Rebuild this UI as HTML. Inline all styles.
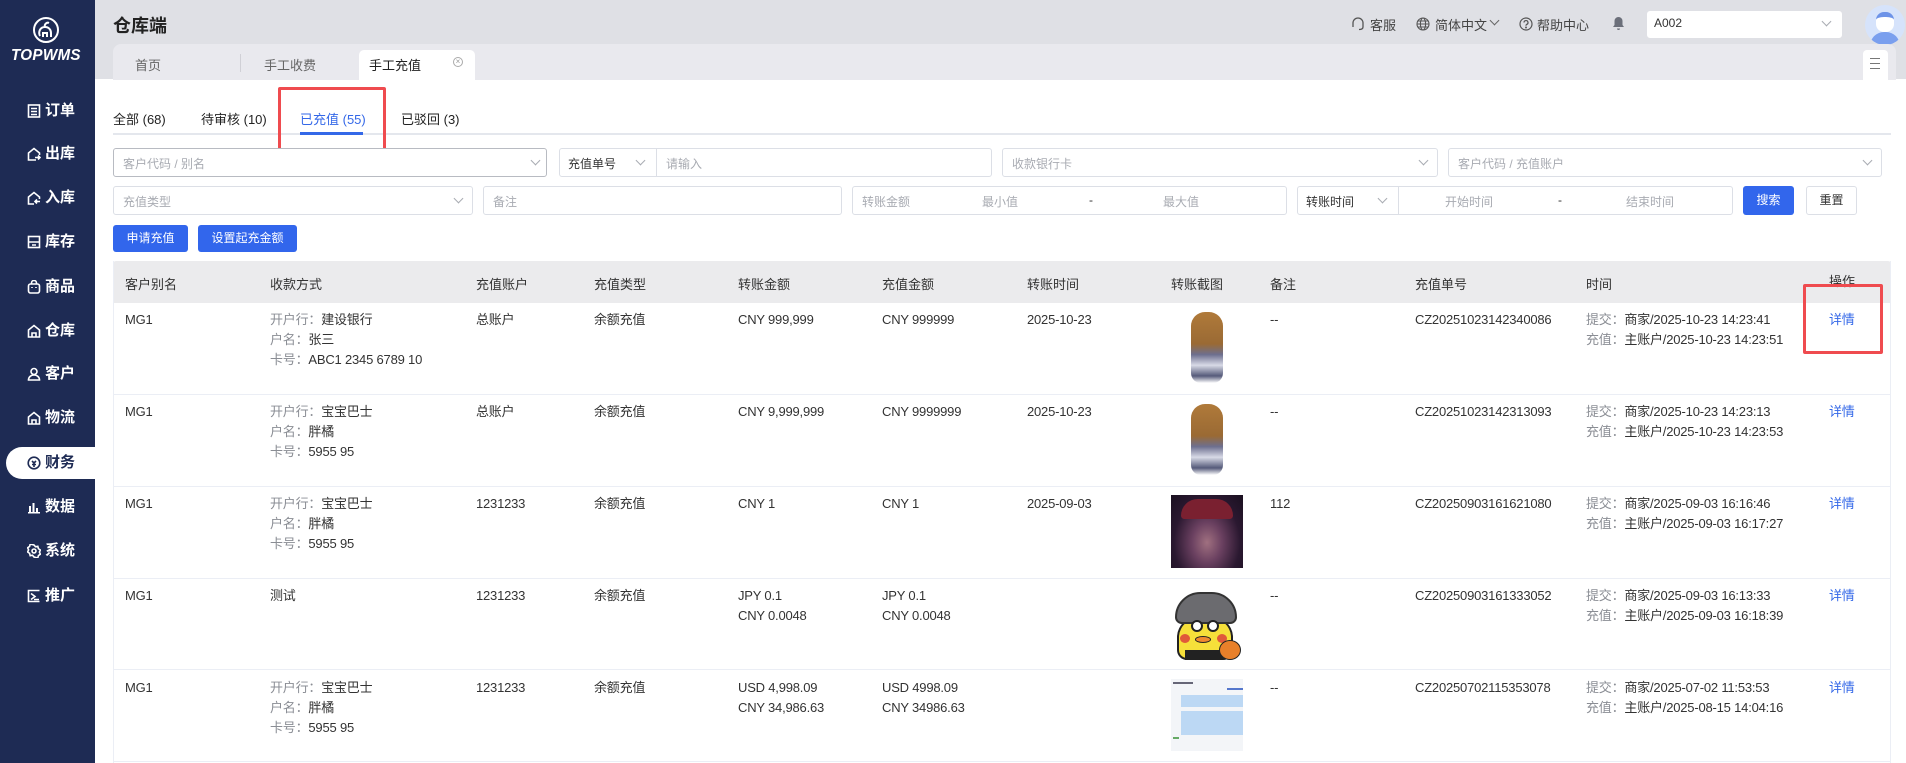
<!DOCTYPE html>
<html><head><meta charset="utf-8">
<style>
*{margin:0;padding:0;box-sizing:border-box}
body{width:1906px;height:763px;overflow:hidden;background:#fff;font-family:"Liberation Sans","Noto Sans CJK SC",sans-serif;font-size:13px;color:#333;position:relative}
.a{position:absolute}
.side{left:0;top:0;width:95px;height:763px;background:#1e2b54}
.mi{position:absolute;left:27px;color:#fff;font-weight:bold;font-size:15px;height:20px;line-height:20px;white-space:nowrap}
.mi svg{position:absolute;left:0;top:3px}
.mi span{position:absolute;left:18px;top:0}
.hdr{left:95px;top:0;width:1811px;height:79px;background:#dfe0e5}
.box{position:absolute;border:1px solid #dcdfe6;border-radius:3px;background:#fff}
.ph{position:absolute;color:#a8abb2;font-size:12px;white-space:nowrap}
.chev{position:absolute;width:7px;height:7px;border-right:1px solid #a8abb2;border-bottom:1px solid #a8abb2;transform:rotate(45deg)}
.btn{position:absolute;background:#3266ec;color:#fff;border-radius:3px;font-size:12px;text-align:center;line-height:27px}
.th{position:absolute;top:274px;font-size:13px;color:#333}
.c{position:absolute;font-size:13px;color:#333;white-space:nowrap;line-height:20px;letter-spacing:-0.2px}
.g{color:#8a8d94}
.row{position:absolute;left:113px;width:1778px;height:1px;background:#ebeef5}
.lnk{color:#3468e8}
</style></head><body>
<div class="a side">
  <svg class="a" style="left:32px;top:16px" width="28" height="28" viewBox="0 0 28 28" fill="none" stroke="#fff" stroke-width="2"><circle cx="14" cy="14" r="12"/><path d="M8 20c-2-4 0-9 5-9 4 0 6 3 6 6v4M13 11c-1-3 2-5 4-4M11 21v-4h4v4"/></svg>
  <div class="a" style="left:11px;top:47px;color:#fff;font-weight:bold;font-style:italic;font-size:16px;letter-spacing:0.3px;transform:scaleX(0.95);transform-origin:left">TOPWMS</div>
  <div class="mi" style="top:101px"><svg width="14" height="14" viewBox="0 0 14 14" fill="none" stroke="#fff" stroke-width="1.6"><rect x="1.5" y="1" width="11" height="12"/><path d="M4 4.5h6M4 7.5h6M4 10.5h6"/></svg><span>订单</span></div>
  <div class="mi" style="top:144px"><svg width="14" height="14" viewBox="0 0 14 14" fill="none" stroke="#fff" stroke-width="1.6"><path d="M9 13H1.5V6L7 1.5 12.5 6v2M8 10.5h5M11 8.5l2 2-2 2"/></svg><span>出库</span></div>
  <div class="mi" style="top:188px"><svg width="14" height="14" viewBox="0 0 14 14" fill="none" stroke="#fff" stroke-width="1.6"><path d="M7 13H1.5V6L7 1.5 12.5 6v2M13 10.5H8M10 8.5l-2 2 2 2"/></svg><span>入库</span></div>
  <div class="mi" style="top:232px"><svg width="14" height="14" viewBox="0 0 14 14" fill="none" stroke="#fff" stroke-width="1.6"><rect x="1.5" y="1.5" width="11" height="11"/><path d="M1.5 7h11M5 10h4"/></svg><span>库存</span></div>
  <div class="mi" style="top:277px"><svg width="14" height="14" viewBox="0 0 14 14" fill="none" stroke="#fff" stroke-width="1.6"><rect x="1.5" y="4" width="11" height="9" rx="2"/><path d="M4.5 4V3a2.5 2.5 0 0 1 5 0v1M5 7v1M9 7v1"/></svg><span>商品</span></div>
  <div class="mi" style="top:321px"><svg width="14" height="14" viewBox="0 0 14 14" fill="none" stroke="#fff" stroke-width="1.6"><path d="M1.5 13V6L7 1.5 12.5 6v7zM5 13V9h4v4"/></svg><span>仓库</span></div>
  <div class="mi" style="top:364px"><svg width="14" height="14" viewBox="0 0 14 14" fill="none" stroke="#fff" stroke-width="1.6"><circle cx="7" cy="4.5" r="3"/><path d="M1.5 13c0-3 2.5-5 5.5-5s5.5 2 5.5 5z"/></svg><span>客户</span></div>
  <div class="mi" style="top:408px"><svg width="14" height="14" viewBox="0 0 14 14" fill="none" stroke="#fff" stroke-width="1.6"><path d="M1.5 13V6L7 1.5 12.5 6v7zM5 13V9h4v4"/></svg><span>物流</span></div>
  <div class="a" style="left:6px;top:447px;width:89px;height:32px;background:#fff;border-radius:16px 0 0 16px"></div>
  <div class="mi" style="top:453px;color:#1e2b54"><svg width="14" height="14" viewBox="0 0 14 14" fill="none" stroke="#1e2b54" stroke-width="1.6"><circle cx="7" cy="7" r="5.8"/><path d="M5 5l2 2 2-2M7 7v4M5 8.5h4"/></svg><span>财务</span></div>
  <div class="mi" style="top:497px"><svg width="14" height="14" viewBox="0 0 14 14" fill="#fff"><rect x="1" y="12" width="12" height="1.5"/><rect x="2" y="6" width="2" height="6"/><rect x="5.5" y="3" width="2" height="9"/><rect x="9" y="8" width="2" height="4"/></svg><span>数据</span></div>
  <div class="mi" style="top:541px"><svg width="14" height="14" viewBox="0 0 14 14" fill="none" stroke="#fff" stroke-width="1.6"><circle cx="7" cy="7" r="2"/><path d="M7 1l1.5 1.8 2.3-.5.6 2.3 2 1.4-1 2.1 1 2.1-2 1.4-.6 2.3-2.3-.5L7 13l-1.5-1.8-2.3.5-.6-2.3-2-1.4 1-2.1-1-2.1 2-1.4.6-2.3 2.3.5z"/></svg><span>系统</span></div>
  <div class="mi" style="top:586px"><svg width="14" height="14" viewBox="0 0 14 14" fill="none" stroke="#fff" stroke-width="1.6"><path d="M12.5 1.5h-11v11h11M4 4.5l4 3-4 3M7 10.5h5"/></svg><span>推广</span></div>
</div>

<div class="a hdr"></div>
<div class="a" style="left:113px;top:12px;font-size:18px;font-weight:bold;color:#222">仓库端</div>
<svg class="a" style="left:1351px;top:17px" width="14" height="14" viewBox="0 0 14 14" fill="none" stroke="#555" stroke-width="1.3"><path d="M2 9V6a5 5 0 0 1 10 0v3M2 8v2M12 8v2c0 1.5-1.5 2.5-4 2.5"/></svg>
<div class="a" style="left:1370px;top:15px;font-size:13px;color:#444">客服</div>
<svg class="a" style="left:1416px;top:17px" width="14" height="14" viewBox="0 0 14 14" fill="none" stroke="#555" stroke-width="1.1"><circle cx="7" cy="7" r="6"/><ellipse cx="7" cy="7" rx="2.6" ry="6"/><path d="M1 7h12M2 4h10M2 10h10"/></svg>
<div class="a" style="left:1435px;top:15px;font-size:13px;color:#444">简体中文</div>
<div class="chev" style="left:1491px;top:17px;border-color:#666"></div>
<svg class="a" style="left:1519px;top:17px" width="14" height="14" viewBox="0 0 14 14" fill="none" stroke="#555" stroke-width="1.2"><circle cx="7" cy="7" r="6"/><path d="M5 5.5a2 2 0 1 1 2.5 2c-.5.2-.5.7-.5 1.3"/><circle cx="7" cy="10.5" r=".4" fill="#555"/></svg>
<div class="a" style="left:1537px;top:15px;font-size:13px;color:#444">帮助中心</div>
<svg class="a" style="left:1612px;top:16px" width="13" height="15" viewBox="0 0 13 15" fill="#6b6f7a"><path d="M6.5 1a4 4 0 0 1 4 4v4l1.5 2H1l1.5-2V5a4 4 0 0 1 4-4zM5 12.5h3a1.5 1.5 0 0 1-3 0z"/></svg>
<div class="box" style="left:1647px;top:11px;width:195px;height:27px;border-color:#fff"></div>
<div class="a" style="left:1654px;top:16px;font-size:12px;color:#333">A002</div>
<div class="chev" style="left:1823px;top:18px"></div>
<div class="a" style="left:1865px;top:5px;width:40px;height:40px;border-radius:50%;background:#d6e3fb;overflow:hidden">
  <div class="a" style="left:11px;top:7px;width:18px;height:20px;border-radius:8px;background:#fff;border-top:5px solid #6d93e8"></div>
  <div class="a" style="left:5px;top:27px;width:30px;height:16px;border-radius:14px 14px 0 0;background:#7a9fee"></div>
</div>

<div class="a" style="left:113px;top:44px;width:1783px;height:36px;background:#e9e9ee;border-radius:8px 8px 0 0"></div>
<div class="a" style="left:135px;top:55px;font-size:13px;color:#666">首页</div>
<div class="a" style="left:240px;top:54px;width:1px;height:18px;background:#d0d0d6"></div>
<div class="a" style="left:264px;top:55px;font-size:13px;color:#666">手工收费</div>
<div class="a" style="left:359px;top:50px;width:116px;height:30px;background:#fff;border-radius:5px 5px 0 0"></div>
<div class="a" style="left:369px;top:55px;font-size:13px;color:#222">手工充值</div>
<div class="a" style="left:453px;top:57px;width:10px;height:10px;border:1px solid #aaa;border-radius:50%;font-size:8px;line-height:8px;text-align:center;color:#999">×</div>
<div class="a" style="left:1863px;top:50px;width:25px;height:30px;background:#fff;border-radius:4px 4px 0 0"></div>
<div class="a" style="left:1870px;top:58px;width:10px;height:1px;background:#777;box-shadow:0 5px 0 #777,0 10px 0 #777"></div>

<div class="a" style="left:113px;top:109px;font-size:13px;color:#222">全部 (68)</div>
<div class="a" style="left:201px;top:109px;font-size:13px;color:#222">待审核 (10)</div>
<div class="a" style="left:300px;top:109px;font-size:13px;color:#3468e8">已充值 (55)</div>
<div class="a" style="left:401px;top:109px;font-size:13px;color:#222">已驳回 (3)</div>
<div class="a" style="left:113px;top:133px;width:1778px;height:2px;background:#e4e7ed"></div>
<div class="a" style="left:300px;top:132px;width:63px;height:3px;background:#3468e8"></div>
<div class="a" style="left:278px;top:87px;width:108px;height:65px;border:3px solid #ef4b4f;border-radius:2px"></div>

<div class="box" style="left:113px;top:148px;width:434px;height:29px;border-color:#b8bbc2"></div>
<div class="ph" style="left:123px;top:155px">客户代码 / 别名</div><div class="chev" style="left:532px;top:157px"></div>
<div class="box" style="left:559px;top:148px;width:433px;height:29px"></div>
<div class="a" style="left:656px;top:149px;width:1px;height:27px;background:#dcdfe6"></div>
<div class="ph" style="left:568px;top:155px;color:#333">充值单号</div><div class="chev" style="left:637px;top:157px"></div>
<div class="ph" style="left:666px;top:155px">请输入</div>
<div class="box" style="left:1002px;top:148px;width:436px;height:29px"></div>
<div class="ph" style="left:1012px;top:155px">收款银行卡</div><div class="chev" style="left:1420px;top:157px"></div>
<div class="box" style="left:1448px;top:148px;width:434px;height:29px"></div>
<div class="ph" style="left:1458px;top:155px">客户代码 / 充值账户</div><div class="chev" style="left:1864px;top:157px"></div>
<div class="box" style="left:113px;top:186px;width:360px;height:29px"></div>
<div class="ph" style="left:123px;top:193px">充值类型</div><div class="chev" style="left:455px;top:195px"></div>
<div class="box" style="left:483px;top:186px;width:359px;height:29px"></div>
<div class="ph" style="left:493px;top:193px">备注</div>
<div class="box" style="left:852px;top:186px;width:435px;height:29px"></div>
<div class="ph" style="left:862px;top:193px">转账金额</div>
<div class="ph" style="left:982px;top:193px">最小值</div>
<div class="ph" style="left:1089px;top:193px;color:#333">-</div>
<div class="ph" style="left:1163px;top:193px">最大值</div>
<div class="box" style="left:1297px;top:186px;width:436px;height:29px"></div>
<div class="a" style="left:1398px;top:187px;width:1px;height:27px;background:#dcdfe6"></div>
<div class="ph" style="left:1306px;top:193px;color:#333">转账时间</div><div class="chev" style="left:1379px;top:195px"></div>
<div class="ph" style="left:1445px;top:193px">开始时间</div>
<div class="ph" style="left:1558px;top:193px;color:#333">-</div>
<div class="ph" style="left:1626px;top:193px">结束时间</div>
<div class="btn" style="left:1743px;top:186px;width:51px;height:29px;line-height:29px">搜索</div>
<div class="box" style="left:1806px;top:186px;width:51px;height:29px;text-align:center;line-height:27px;font-size:12px;color:#333">重置</div>
<div class="btn" style="left:113px;top:225px;width:75px;height:27px">申请充值</div>
<div class="btn" style="left:198px;top:225px;width:99px;height:27px">设置起充金额</div>

<div class="a" style="left:113px;top:261px;width:1778px;height:42px;background:#ebebed;border-radius:3px 3px 0 0"></div>
<div class="a" style="left:113px;top:261px;width:1px;height:502px;background:#ebeef5"></div>
<div class="a" style="left:1890px;top:261px;width:1px;height:502px;background:#ebeef5"></div>
<div class="th" style="left:125px">客户别名</div>
<div class="th" style="left:270px">收款方式</div>
<div class="th" style="left:476px">充值账户</div>
<div class="th" style="left:594px">充值类型</div>
<div class="th" style="left:738px">转账金额</div>
<div class="th" style="left:882px">充值金额</div>
<div class="th" style="left:1027px">转账时间</div>
<div class="th" style="left:1171px">转账截图</div>
<div class="th" style="left:1270px">备注</div>
<div class="th" style="left:1415px">充值单号</div>
<div class="th" style="left:1586px">时间</div>
<div class="th" style="left:1829px;top:271px">操作</div>
<div class="row" style="top:394px"></div>
<div class="row" style="top:486px"></div>
<div class="row" style="top:578px"></div>
<div class="row" style="top:669px"></div>
<div class="row" style="top:761px"></div>

<div class="c" style="left:125px;top:310px">MG1</div>
<div class="c" style="left:270px;top:310px"><span class="g">开户行：</span>建设银行<br><span class="g">户名：</span>张三<br><span class="g">卡号：</span>ABC1 2345 6789 10</div>
<div class="c" style="left:476px;top:310px">总账户</div>
<div class="c" style="left:594px;top:310px">余额充值</div>
<div class="c" style="left:738px;top:310px">CNY 999,999</div>
<div class="c" style="left:882px;top:310px">CNY 999999</div>
<div class="c" style="left:1027px;top:310px">2025-10-23</div>
<div class="a" style="left:1191px;top:312px;width:32px;height:71px;border-radius:14px 14px 10px 10px;background:linear-gradient(#b07a3a 0%,#9a6a34 45%,#6d6f8f 60%,#d8dae6 75%,#555a7a 90%,#fff 100%)"></div>
<div class="c" style="left:1270px;top:310px">--</div>
<div class="c" style="left:1415px;top:310px">CZ20251023142340086</div>
<div class="c" style="left:1586px;top:310px"><span class="g">提交：</span>商家/2025-10-23 14:23:41<br><span class="g">充值：</span>主账户/2025-10-23 14:23:51</div>
<div class="c lnk" style="left:1829px;top:310px">详情</div>
<div class="a" style="left:1803px;top:284px;width:80px;height:70px;border:3px solid #ef4b4f;border-radius:2px"></div>

<div class="c" style="left:125px;top:402px">MG1</div>
<div class="c" style="left:270px;top:402px"><span class="g">开户行：</span>宝宝巴士<br><span class="g">户名：</span>胖橘<br><span class="g">卡号：</span>5955 95</div>
<div class="c" style="left:476px;top:402px">总账户</div>
<div class="c" style="left:594px;top:402px">余额充值</div>
<div class="c" style="left:738px;top:402px">CNY 9,999,999</div>
<div class="c" style="left:882px;top:402px">CNY 9999999</div>
<div class="c" style="left:1027px;top:402px">2025-10-23</div>
<div class="a" style="left:1191px;top:404px;width:32px;height:71px;border-radius:14px 14px 10px 10px;background:linear-gradient(#b07a3a 0%,#9a6a34 45%,#6d6f8f 60%,#d8dae6 75%,#555a7a 90%,#fff 100%)"></div>
<div class="c" style="left:1270px;top:402px">--</div>
<div class="c" style="left:1415px;top:402px">CZ20251023142313093</div>
<div class="c" style="left:1586px;top:402px"><span class="g">提交：</span>商家/2025-10-23 14:23:13<br><span class="g">充值：</span>主账户/2025-10-23 14:23:53</div>
<div class="c lnk" style="left:1829px;top:402px">详情</div>

<div class="c" style="left:125px;top:494px">MG1</div>
<div class="c" style="left:270px;top:494px"><span class="g">开户行：</span>宝宝巴士<br><span class="g">户名：</span>胖橘<br><span class="g">卡号：</span>5955 95</div>
<div class="c" style="left:476px;top:494px">1231233</div>
<div class="c" style="left:594px;top:494px">余额充值</div>
<div class="c" style="left:738px;top:494px">CNY 1</div>
<div class="c" style="left:882px;top:494px">CNY 1</div>
<div class="c" style="left:1027px;top:494px">2025-09-03</div>
<div class="a" style="left:1171px;top:495px;width:72px;height:73px;background:radial-gradient(ellipse at 50% 65%,#a07080 0%,#6a4060 30%,#2a1830 65%,#1a1020 100%)"><div class="a" style="left:10px;top:4px;width:52px;height:20px;border-radius:20px 20px 4px 4px;background:#7a2030"></div></div>
<div class="c" style="left:1270px;top:494px">112</div>
<div class="c" style="left:1415px;top:494px">CZ20250903161621080</div>
<div class="c" style="left:1586px;top:494px"><span class="g">提交：</span>商家/2025-09-03 16:16:46<br><span class="g">充值：</span>主账户/2025-09-03 16:17:27</div>
<div class="c lnk" style="left:1829px;top:494px">详情</div>

<div class="c" style="left:125px;top:586px">MG1</div>
<div class="c" style="left:270px;top:586px">测试</div>
<div class="c" style="left:476px;top:586px">1231233</div>
<div class="c" style="left:594px;top:586px">余额充值</div>
<div class="c" style="left:738px;top:586px">JPY 0.1<br>CNY 0.0048</div>
<div class="c" style="left:882px;top:586px">JPY 0.1<br>CNY 0.0048</div>
<div class="a" style="left:1171px;top:590px;width:72px;height:70px">
  <div class="a" style="left:6px;top:24px;width:56px;height:46px;border-radius:50% 50% 10px 10px;background:#f6e03a;border:2px solid #222"></div>
  <div class="a" style="left:4px;top:2px;width:62px;height:32px;border-radius:30px 30px 8px 8px;background:#6b6b6f;border:2px solid #333"></div>
  <div class="a" style="left:20px;top:30px;width:12px;height:12px;border-radius:50%;background:#fff;border:2px solid #222"></div>
  <div class="a" style="left:36px;top:30px;width:12px;height:12px;border-radius:50%;background:#fff;border:2px solid #222"></div>
  <div class="a" style="left:9px;top:44px;width:10px;height:9px;border-radius:50%;background:#e05a3a"></div>
  <div class="a" style="left:46px;top:44px;width:10px;height:9px;border-radius:50%;background:#e05a3a"></div>
  <div class="a" style="left:24px;top:46px;width:16px;height:7px;border-radius:50%;background:#f08a30;border:1px solid #222"></div>
  <div class="a" style="left:14px;top:60px;width:38px;height:10px;background:#222"></div>
  <div class="a" style="left:48px;top:50px;width:22px;height:20px;border-radius:50%;background:#e8802a;border:1px solid #222"></div>
</div>
<div class="c" style="left:1270px;top:586px">--</div>
<div class="c" style="left:1415px;top:586px">CZ20250903161333052</div>
<div class="c" style="left:1586px;top:586px"><span class="g">提交：</span>商家/2025-09-03 16:13:33<br><span class="g">充值：</span>主账户/2025-09-03 16:18:39</div>
<div class="c lnk" style="left:1829px;top:586px">详情</div>

<div class="c" style="left:125px;top:678px">MG1</div>
<div class="c" style="left:270px;top:678px"><span class="g">开户行：</span>宝宝巴士<br><span class="g">户名：</span>胖橘<br><span class="g">卡号：</span>5955 95</div>
<div class="c" style="left:476px;top:678px">1231233</div>
<div class="c" style="left:594px;top:678px">余额充值</div>
<div class="c" style="left:738px;top:678px">USD 4,998.09<br>CNY 34,986.63</div>
<div class="c" style="left:882px;top:678px">USD 4998.09<br>CNY 34986.63</div>
<div class="a" style="left:1171px;top:679px;width:72px;height:72px;background:#f3f5f8">
  <div class="a" style="left:2px;top:3px;width:20px;height:2px;background:#667"></div>
  <div class="a" style="left:56px;top:9px;width:16px;height:2px;background:#5577cc"></div>
  <div class="a" style="left:10px;top:16px;width:62px;height:12px;background:#bcd8f4"></div>
  <div class="a" style="left:10px;top:32px;width:62px;height:24px;background:#bcd8f4"></div>
  <div class="a" style="left:2px;top:58px;width:6px;height:2px;background:#6a6"></div>
</div>
<div class="c" style="left:1270px;top:678px">--</div>
<div class="c" style="left:1415px;top:678px">CZ20250702115353078</div>
<div class="c" style="left:1586px;top:678px"><span class="g">提交：</span>商家/2025-07-02 11:53:53<br><span class="g">充值：</span>主账户/2025-08-15 14:04:16</div>
<div class="c lnk" style="left:1829px;top:678px">详情</div>
</body></html>
